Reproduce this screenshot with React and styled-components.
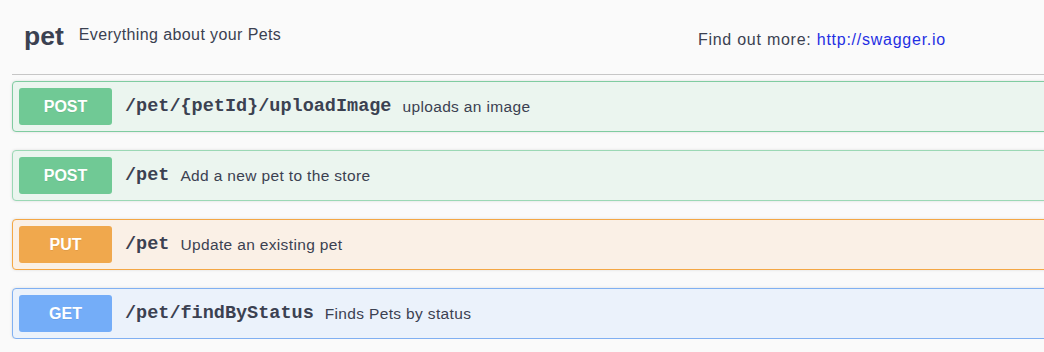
import React from "react";
import styled, { createGlobalStyle } from "styled-components";

const GlobalStyle = createGlobalStyle`
  html, body {
    margin: 0;
    padding: 0;
    background: #fafafa;
    overflow: hidden;
  }
  body {
    font-family: "Liberation Sans", Arial, sans-serif;
    color: #3b4151;
  }
`;

const Page = styled.div`
  padding-left: 12px;
  margin-right: -12px;
`;

const TagHeader = styled.div`
  display: flex;
  align-items: center;
  height: 75px;
  padding: 0 96px 0 12px;
  border-bottom: 1px solid #c6c6c6;
  box-sizing: border-box;
`;

const TagName = styled.span`
  font-size: 26.5px;
  font-weight: 700;
  color: #3b4151;
  margin-right: 15px;
  position: relative;
  top: -1px;
`;

const TagDesc = styled.span`
  flex: 1;
  font-size: 16px;
  letter-spacing: 0.4px;
  color: #3b4151;
  position: relative;
  top: -2px;
`;

const ExternalDocs = styled.div`
  font-size: 16px;
  letter-spacing: 0.75px;
  color: #3b4151;
  margin-right: 14px;
  position: relative;
  top: 3px;
`;

const DocLink = styled.a`
  color: #1f2fe3;
  text-decoration: none;
`;

const OpList = styled.div`
  display: flex;
  flex-direction: column;
  gap: 18px;
  padding-top: 6px;
`;

const themes = {
  post: { badge: "#70c995", border: "#80cca1", bg: "#ebf5ef" },
  postAlt: { badge: "#70c995", border: "#9bd8b5", bg: "#ebf5ef" },
  put: { badge: "#f0a84d", border: "#f4a744", bg: "#faf0e6" },
  get: { badge: "#74adf8", border: "#80b0f2", bg: "#ebf2fb" },
};

const OpBlock = styled.div`
  display: flex;
  align-items: center;
  padding: 6px;
  border: 1px solid ${(p) => themes[p.$kind].border};
  background: ${(p) => themes[p.$kind].bg};
  border-radius: 4px;
  box-shadow: 0 0 3px rgba(0, 0, 0, 0.12);
`;

const Method = styled.span`
  display: flex;
  align-items: center;
  justify-content: center;
  width: 93px;
  height: 37px;
  border-radius: 3px;
  background: ${(p) => themes[p.$kind].badge};
  color: #fff;
  font-size: 16px;
  font-weight: 700;
  text-shadow: 0 1px 0 rgba(0, 0, 0, 0.08);
  flex-shrink: 0;
`;

const Path = styled.span`
  margin-left: 13px;
  font-family: "Liberation Mono", "Courier New", monospace;
  font-size: 18.5px;
  font-weight: 700;
  color: #3b4151;
`;

const Summary = styled.span`
  margin-left: 11px;
  font-size: 15.5px;
  letter-spacing: 0.35px;
  color: #3b4151;
`;

const ops = [
  { kind: "post", method: "POST", path: "/pet/{petId}/uploadImage", summary: "uploads an image" },
  { kind: "postAlt", method: "POST", path: "/pet", summary: "Add a new pet to the store" },
  { kind: "put", method: "PUT", path: "/pet", summary: "Update an existing pet" },
  { kind: "get", method: "GET", path: "/pet/findByStatus", summary: "Finds Pets by status" },
];

export default function App() {
  return (
    <>
      <GlobalStyle />
      <Page>
        <TagHeader>
          <TagName>pet</TagName>
          <TagDesc>Everything about your Pets</TagDesc>
          <ExternalDocs>
            Find out more: <DocLink href="#">http://swagger.io</DocLink>
          </ExternalDocs>
        </TagHeader>
        <OpList>
          {ops.map((op, i) => (
            <OpBlock key={i} $kind={op.kind}>
              <Method $kind={op.kind}>{op.method}</Method>
              <Path>{op.path}</Path>
              <Summary>{op.summary}</Summary>
            </OpBlock>
          ))}
        </OpList>
      </Page>
    </>
  );
}
